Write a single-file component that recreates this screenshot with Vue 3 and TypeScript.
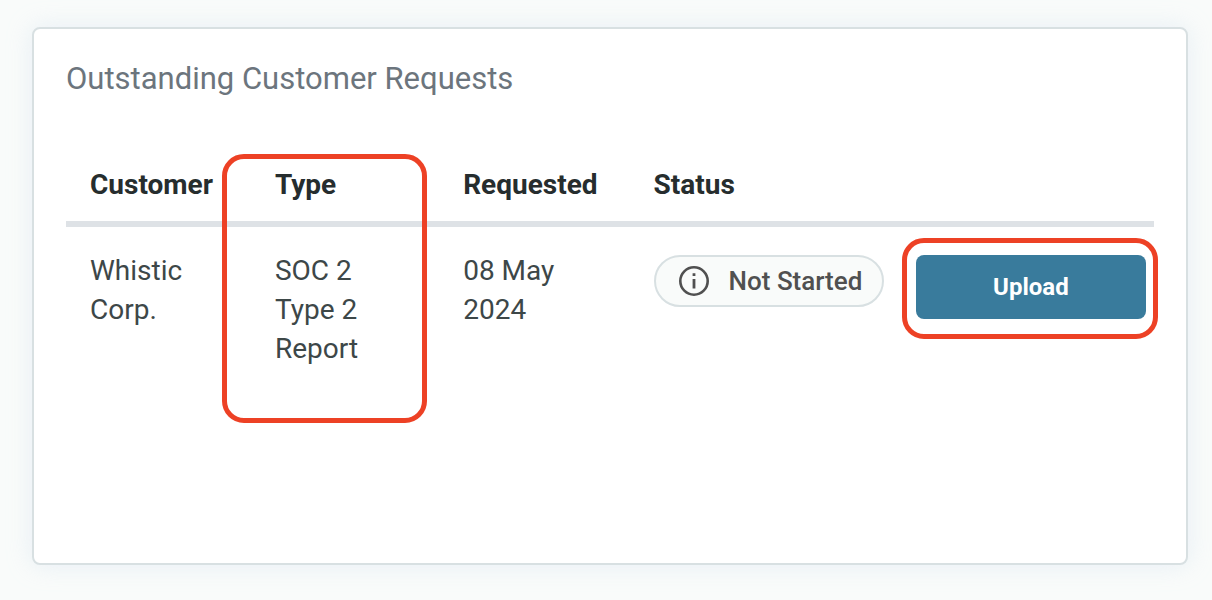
<script setup lang="ts">
interface CustomerRequest {
  customer: string
  type: string
  requested: string
  status: string
}

const requests: CustomerRequest[] = [
  { customer: 'Whistic Corp.', type: 'SOC 2 Type 2 Report', requested: '08 May 2024', status: 'Not Started' },
]
</script>

<template>
  <main class="page">
    <section class="card" aria-labelledby="card-title">
      <h2 id="card-title" class="title">Outstanding Customer Requests</h2>
      <table class="table">
        <colgroup>
          <col class="col-customer" />
          <col class="col-type" />
          <col class="col-requested" />
          <col class="col-status" />
          <col />
        </colgroup>
        <thead>
          <tr>
            <th scope="col">Customer</th>
            <th scope="col" class="marked">Type<span class="marker marker-type" aria-hidden="true"></span></th>
            <th scope="col">Requested</th>
            <th scope="col">Status</th>
            <td></td>
          </tr>
        </thead>
        <tbody>
          <tr v-for="request in requests" :key="request.customer">
            <td>{{ request.customer }}</td>
            <td>{{ request.type }}</td>
            <td>{{ request.requested }}</td>
            <td class="control">
              <span class="pill">
                <svg class="icon" viewBox="0 0 30 30" aria-hidden="true">
                  <circle cx="15" cy="15" r="13.7" fill="none" stroke="currentColor" stroke-width="2.6" />
                  <path d="M13.6 7.2h2.8v2.8h-2.8zM13.6 13h2.8v9.6h-2.8z" fill="currentColor" />
                </svg>
                {{ request.status }}
              </span>
            </td>
            <td class="control">
              <div class="action">
                <button type="button" class="upload">Upload</button>
                <span class="marker marker-upload" aria-hidden="true"></span>
              </div>
            </td>
          </tr>
        </tbody>
      </table>
    </section>
  </main>
</template>

<style>
body {
  margin: 0;
  background: #f9fbfa;
}
</style>

<style scoped>
.page {
  box-sizing: border-box;
  display: flex;
  min-height: 100vh;
  padding: 27px 24px 35px 32px;
  font-family: Roboto, "Liberation Sans", sans-serif;
  color: #3d4748;
}

.card {
  box-sizing: border-box;
  flex: 1;
  min-width: 0;
  padding: 28px 32px;
  border: 2px solid #d8e0e2;
  border-radius: 8px;
  background: #fff;
  box-shadow: 0 0 24px rgba(205, 222, 240, 0.4);
}

.title {
  margin: 0 0 40px;
  font-size: 31px;
  line-height: 44px;
  font-weight: 400;
  color: #6c757d;
}

.table {
  width: 100%;
  table-layout: fixed;
  border-collapse: separate;
  border-spacing: 0;
  font-size: 28px;
  line-height: 39px;
}

.col-customer { width: 17%; }
.col-type { width: 17.3%; }
.col-requested { width: 17.5%; }
.col-status { width: 24.1%; }

th,
td {
  padding: 24px;
  text-align: left;
  vertical-align: top;
}

thead th,
thead td {
  padding-block: 24px 17px;
  border-bottom: 6px solid #dee2e6;
}

th {
  font-weight: 700;
  color: #262d2e;
}

.marked,
.action {
  position: relative;
}

.marker {
  position: absolute;
  box-sizing: border-box;
  border: 5px solid #ed4125;
  border-radius: 22px;
  pointer-events: none;
}

.marker-type {
  top: 13px;
  left: -29px;
  right: 12px;
  height: 269px;
}

.marker-upload {
  inset: -17px -12px -20px -14px;
}

tbody .control {
  padding: 28px 8px 24px 24px;
}

.pill {
  box-sizing: border-box;
  display: flex;
  align-items: center;
  gap: 20px;
  height: 52px;
  padding: 0 16px 0 23px;
  border: 2px solid #d8e0e2;
  border-radius: 26px;
  background: #f9fbfa;
  font-size: 26px;
  line-height: 36px;
  font-weight: 500;
  color: #505050;
  white-space: nowrap;
}

.icon {
  flex: none;
  width: 30px;
  height: 30px;
}

.upload {
  display: block;
  width: 100%;
  height: 64px;
  padding: 0;
  border: 0;
  border-radius: 8px;
  background: #397b9c;
  font: inherit;
  font-size: 24px;
  line-height: 36px;
  font-weight: 700;
  color: #fff;
  cursor: pointer;
}
</style>
